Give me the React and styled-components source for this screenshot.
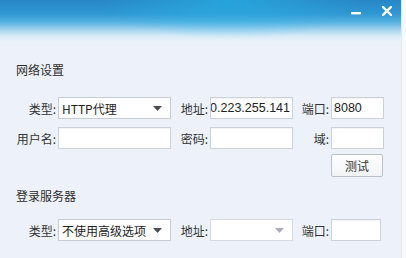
import React from "react";
import styled, { createGlobalStyle } from "styled-components";

const GlobalStyle = createGlobalStyle`
  html, body {
    margin: 0;
    padding: 0;
    background: #f7f9fc;
  }
  body {
    font-family: "Noto Sans CJK SC", "Noto Sans", sans-serif;
    font-size: 12px;
    color: #333;
  }
`;

function Arrow({ disabled }) {
  return (
    <svg width="9" height="5" viewBox="0 0 9 5">
      <path d="M0 0 L9 0 L4.5 5 Z" fill={disabled ? "#a9adb3" : "#4a4d52"} />
    </svg>
  );
}

function App() {
  return (
    <>
      <GlobalStyle />
      <Page>
        <Window>
          <Header>
            <Controls>
              <CtrlButton aria-label="minimize">
                <svg width="10" height="10" viewBox="0 0 10 10">
                  <rect x="0" y="6" width="10" height="2.4" fill="#fff" />
                </svg>
              </CtrlButton>
              <CtrlButton aria-label="close">
                <svg width="10" height="10" viewBox="0 0 10 10">
                  <path
                    d="M1 1 L9 9 M9 1 L1 9"
                    stroke="#fff"
                    strokeWidth="2.4"
                    strokeLinecap="square"
                  />
                </svg>
              </CtrlButton>
            </Controls>
          </Header>

          <Body>
            <SectionTitle>网络设置</SectionTitle>
            <FormGrid $top={19}>
              <Label>类型:</Label>
              <Select>
                <span>HTTP代理</span>
                <Arrow />
              </Select>
              <Label>地址:</Label>
              <Field $scroll>
                <Mono>60.223.255.141</Mono>
              </Field>
              <Label>端口:</Label>
              <Field>
                <Mono>8080</Mono>
              </Field>

              <Label>用户名:</Label>
              <Field />
              <Label>密码:</Label>
              <Field />
              <Label>域:</Label>
              <Field />

              <ButtonCell>
                <Button>测试</Button>
              </ButtonCell>
            </FormGrid>

            <SectionTitle $top={9}>登录服务器</SectionTitle>
            <FormGrid $top={15}>
              <Label>类型:</Label>
              <Select>
                <span>不使用高级选项</span>
                <Arrow />
              </Select>
              <Label>地址:</Label>
              <Select $disabled>
                <span />
                <Arrow disabled />
              </Select>
              <Label>端口:</Label>
              <Field $narrow />
            </FormGrid>
          </Body>
        </Window>
        <Edge />
      </Page>
    </>
  );
}

export default App;

const Page = styled.div`
  display: flex;
  width: 406px;
  height: 258px;
  overflow: hidden;
`;

const Window = styled.div`
  width: 401px;
  height: 258px;
  background: #edf2fa;
  display: flex;
  flex-direction: column;
`;

const Edge = styled.div`
  flex: 1;
  background: #f8f9fb;
  border-left: 1px solid #e3e8ef;
`;

const Header = styled.div`
  height: 42px;
  flex-shrink: 0;
  background:
    radial-gradient(ellipse 130px 40px at 230px 0px, rgba(40, 185, 235, 0.55), rgba(40, 185, 235, 0) 100%),
    linear-gradient(
      to bottom,
      #2787c6 0px,
      #2f98d4 14px,
      #55b0e0 22px,
      #a5d4ef 30px,
      #d8ebf7 36px,
      #edf2fa 42px
    );
  display: flex;
  justify-content: flex-end;
  align-items: flex-start;
`;

const Controls = styled.div`
  display: flex;
  gap: 19px;
  padding: 5px 8px 0 0;
`;

const CtrlButton = styled.div`
  width: 10px;
  height: 10px;
  padding: 1px;
  display: flex;
`;

const Body = styled.div`
  padding: 20px 0 0 16px;
  display: flex;
  flex-direction: column;
`;

const SectionTitle = styled.div`
  font-size: 12px;
  line-height: 16px;
  color: #2d2d2d;
  margin-top: ${(p) => p.$top || 0}px;
`;

const FormGrid = styled.div`
  margin-top: ${(p) => p.$top}px;
  display: grid;
  grid-template-columns: 42px 113px 39px 83px 38px 53px;
  grid-auto-rows: 22px;
  row-gap: 8px;

  & > :nth-child(13) {
    margin-top: -3px;
  }
`;

const Label = styled.div`
  display: flex;
  align-items: center;
  justify-content: flex-end;
  padding-right: 2px;
  font-size: 12px;
  color: #333;
  white-space: nowrap;
`;

const Field = styled.div`
  box-sizing: border-box;
  width: ${(p) => (p.$narrow ? 50 : "auto")}px;
  height: 22px;
  background: #fff;
  border: 1px solid #cbd1d9;
  box-shadow: inset 0 1px 1px rgba(0, 0, 0, 0.05);
  display: flex;
  align-items: center;
  justify-content: ${(p) => (p.$scroll ? "flex-end" : "flex-start")};
  padding: 0 2px;
  overflow: hidden;
  white-space: nowrap;
`;

const Mono = styled.span`
  font-family: "Liberation Sans", Arial, sans-serif;
  font-size: 12.5px;
  color: #222;
`;

const Select = styled.div`
  box-sizing: border-box;
  height: 22px;
  background: #fff;
  border: 1px solid ${(p) => (p.$disabled ? "#d6dbe2" : "#c7cdd5")};
  display: flex;
  align-items: center;
  justify-content: space-between;
  padding: 0 8px 0 3px;
  font-size: 12px;
  color: #222;
  white-space: nowrap;
`;

const ButtonCell = styled.div`
  grid-column: 6;
  grid-row: 3;
  height: 23px;
`;

const Button = styled.div`
  box-sizing: border-box;
  width: 52px;
  height: 23px;
  border: 1px solid #b8c0ca;
  border-radius: 2px;
  background: linear-gradient(to bottom, #ffffff, #f1f3f6);
  display: flex;
  align-items: center;
  justify-content: center;
  font-size: 12px;
  color: #333;
`;
